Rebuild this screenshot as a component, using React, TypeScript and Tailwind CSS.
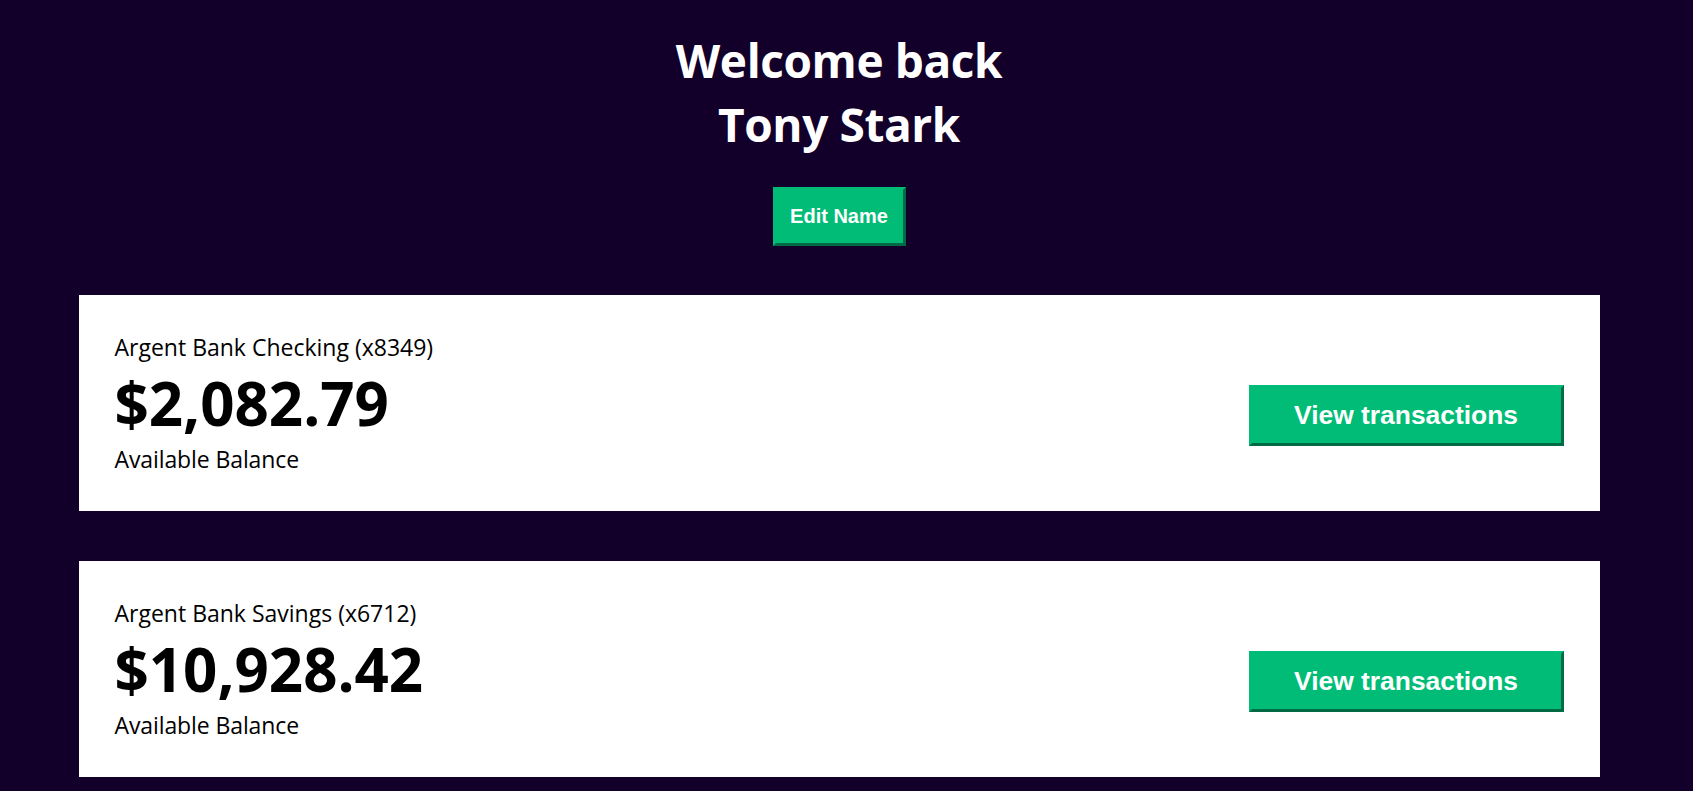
import React from "react";

type Account = {
  title: string;
  amount: string;
  description: string;
};

const accounts: Account[] = [
  { title: "Argent Bank Checking (x8349)", amount: "$2,082.79", description: "Available Balance" },
  { title: "Argent Bank Savings (x6712)", amount: "$10,928.42", description: "Available Balance" },
];

const AccountCard = ({ account }: { account: Account }) => {
  return (
    <section className="w-[1521px] mx-auto bg-white flex items-center justify-between p-[36px] text-black">
      <div className="flex-1">
        <h3 className="text-[23px] leading-[32px] font-normal">{account.title}</h3>
        <p className="text-[60px] leading-[80px] font-bold">{account.amount}</p>
        <p className="text-[23px] leading-[32px] tracking-[-0.1px]">{account.description}</p>
      </div>
      <div className="mt-[24px]">
        <button className="w-[315px] h-[61px] bg-[#00bc77] text-white font-bold text-[26.4px] leading-[30px] border-[3px] border-t-[#00bc77] border-l-[#00bc77] border-r-[#006b45] border-b-[#006b45] font-['Liberation_Sans',Arial,sans-serif]">
          View transactions
        </button>
      </div>
    </section>
  );
};

export default function App() {
  return (
    <div className="min-h-[791px] bg-[#12002b] font-['Open_Sans',sans-serif]">
      <main className="w-[1678px] pb-[40px]">
        <div className="pt-[28px] flex flex-col items-center text-white">
          <h1 className="text-[46px] leading-[64px] font-bold text-center tracking-[-0.4px]">
            Welcome back
            <br />
            Tony Stark
          </h1>
          <button className="mt-[31px] w-[133px] h-[59px] bg-[#00bc77] text-white font-bold text-[20px] leading-[23px] border-[3px] border-t-[#00bc77] border-l-[#00bc77] border-r-[#006b45] border-b-[#006b45] font-['Liberation_Sans',Arial,sans-serif]">
            Edit Name
          </button>
        </div>
        <div className="mt-[49px] flex flex-col gap-[50px]">
          {accounts.map((a) => (
            <AccountCard key={a.title} account={a} />
          ))}
        </div>
      </main>
    </div>
  );
}
